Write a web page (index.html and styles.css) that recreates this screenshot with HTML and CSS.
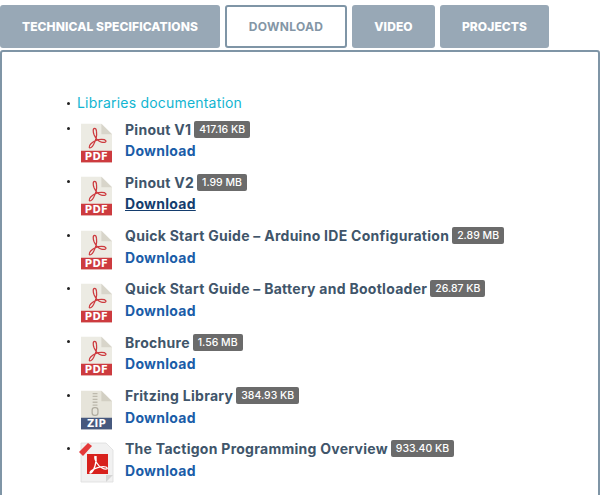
FILE: index.html
```html
<!DOCTYPE html>
<html lang="en">
<head>
    <meta charset="UTF-8">
    <meta name="viewport" content="width=device-width, initial-scale=1.0">
    <title>Download</title>
    <link rel="stylesheet" href="styles.css">
</head>
<body>
    <svg class="defs" width="0" height="0" aria-hidden="true">
        <symbol id="pdfIcon" viewBox="0 0 32 40">
            <path d="M0 0H21L32 11V40H0Z" fill="#ecebe3"/>
            <path d="M21 0L32 11H21Z" fill="#d8d5ca"/>
            <path d="M0 28H32V40H0Z" fill="#cd3b3f"/>
            <path d="M14 5C12 5 12.500 9 13.500 11.500C15 15 18 18.500 21 19C24.500 20 26.500 19 25.500 17.500C24.500 16 19 16 15 17.500C11.500 19 8 22.500 8.500 24.500C9 26 11.500 24.500 13 21.500C15 18 16.500 12 16 8C15.800 6 15 5 14 5Z" fill="none" stroke="#cd3b3f" stroke-width="1.300"/>
        </symbol>
        <symbol id="zipIcon" viewBox="0 0 32 40">
            <path d="M0 0H21L32 11V40H0Z" fill="#e6e4da"/>
            <path d="M21 0L32 11H21Z" fill="#d2cfc3"/>
            <path d="M0 28H32V40H0Z" fill="#47597e"/>
            <path d="M12 3H17M12 6H17M12 9H17M12 12H17M12 15H17" stroke="#bdb9ad" stroke-width="1.300"/>
            <rect x="11.500" y="17.500" width="6" height="8" rx="2.500" fill="none" stroke="#b0aca0" stroke-width="1.300"/>
        </symbol>
        <symbol id="acrobatIcon" viewBox="0 0 36 42">
            <path d="M3 1H28L35 8V40H3Z" fill="#f1f1f1" stroke="#dddddd" stroke-width="0.800"/>
            <path d="M28 33H35L28 40Z" fill="#d5d5d5"/>
            <rect x="9" y="12" width="21" height="20" fill="#d8211d"/>
            <path d="M1 10L10 1L14 4L5 14Z" fill="#e4393a"/>
            <path d="M17 14C16 18 20 24 24 26C28 28 31 27 28 25C25 24 18 25 13 29C11 31 12 32 14 30C16 28 19 20 18 14" fill="none" stroke="#ffffff" stroke-width="1.300"/>
        </symbol>
    </svg>

    <div class="tabs">
        <a class="tab tab-specs">TECHNICAL SPECIFICATIONS</a>
        <a class="tab tab-active">DOWNLOAD</a>
        <a class="tab tab-video">VIDEO</a>
        <a class="tab tab-projects">PROJECTS</a>
    </div>

    <div class="panel">
        <ul class="files">
            <li class="docs-link"><a>Libraries documentation</a></li>
            <li class="file">
                <div class="file-icon"><svg><use href="#pdfIcon"/></svg><span class="icon-label">PDF</span></div>
                <div>
                    <div class="file-title">Pinout V1 <span class="size">417.16 KB</span></div>
                    <a class="download">Download</a>
                </div>
            </li>
            <li class="file">
                <div class="file-icon"><svg><use href="#pdfIcon"/></svg><span class="icon-label">PDF</span></div>
                <div>
                    <div class="file-title">Pinout V2 <span class="size">1.99 MB</span></div>
                    <a class="download download-hover">Download</a>
                </div>
            </li>
            <li class="file">
                <div class="file-icon"><svg><use href="#pdfIcon"/></svg><span class="icon-label">PDF</span></div>
                <div>
                    <div class="file-title">Quick Start Guide – Arduino IDE Configuration <span class="size">2.89 MB</span></div>
                    <a class="download">Download</a>
                </div>
            </li>
            <li class="file">
                <div class="file-icon"><svg><use href="#pdfIcon"/></svg><span class="icon-label">PDF</span></div>
                <div>
                    <div class="file-title">Quick Start Guide – Battery and Bootloader <span class="size">26.87 KB</span></div>
                    <a class="download">Download</a>
                </div>
            </li>
            <li class="file">
                <div class="file-icon"><svg><use href="#pdfIcon"/></svg><span class="icon-label">PDF</span></div>
                <div>
                    <div class="file-title">Brochure <span class="size">1.56 MB</span></div>
                    <a class="download">Download</a>
                </div>
            </li>
            <li class="file">
                <div class="file-icon"><svg><use href="#zipIcon"/></svg><span class="icon-label">ZIP</span></div>
                <div>
                    <div class="file-title">Fritzing Library <span class="size">384.93 KB</span></div>
                    <a class="download">Download</a>
                </div>
            </li>
            <li class="file">
                <div class="file-icon file-icon-wide"><svg><use href="#acrobatIcon"/></svg></div>
                <div>
                    <div class="file-title">The Tactigon Programming Overview <span class="size">933.40 KB</span></div>
                    <a class="download">Download</a>
                </div>
            </li>
        </ul>
    </div>
</body>
</html>
```

FILE: styles.css
```css
body {
    font-family: Inter, "Open Sans", Arial, sans-serif;
    margin: 0;
    padding: 5px 0 0;
    height: 490px;
    overflow: hidden;
    background-color: white;
}

.defs {
    position: absolute;
}

/* Tabs */
.tabs {
    display: flex;
    gap: 5px;
    height: 43px;
}

.tab {
    display: flex;
    align-items: center;
    justify-content: center;
    box-sizing: border-box;
    background-color: #98a8b6;
    color: white;
    font-size: 12px;
    font-weight: 800;
    letter-spacing: 0.1px;
    border-radius: 3px;
}

.tab-specs {
    width: 220px;
}

.tab-active {
    width: 122px;
    background-color: white;
    color: #8496a6;
    font-weight: 700;
    letter-spacing: 0.3px;
    border: 2px solid #7f95a6;
}

.tab-video {
    width: 83px;
}

.tab-projects {
    width: 109px;
}

/* Panel */
.panel {
    margin-top: 2px;
    height: 460px;
    border: 2px solid #7f95a6;
    border-radius: 3px;
}

.files {
    list-style: none;
    margin: 0;
    padding: 42px 0 0 65px;
}

.files li {
    position: relative;
    padding-left: 10px;
}

.files li::before {
    content: "";
    position: absolute;
    left: 0;
    top: 8px;
    width: 3px;
    height: 3px;
    border-radius: 50%;
    background-color: #222222;
}

.docs-link {
    height: 25px;
    font-size: 14px;
    letter-spacing: 0.2px;
    line-height: 18px;
    color: #12b5d1;
}

.file {
    display: flex;
    gap: 13px;
    height: 53.33px;
    font-size: 14px;
    font-weight: 700;
    letter-spacing: 0.27px;
}

.file-icon {
    position: relative;
    flex: none;
    width: 31px;
    height: 40px;
    margin: 4px 0 0 4px;
}

.file-icon svg {
    display: block;
    width: 100%;
    height: 100%;
}

.icon-label {
    position: absolute;
    left: 0;
    right: 0;
    bottom: 0;
    font-family: "DejaVu Sans", sans-serif;
    font-size: 10px;
    font-weight: bold;
    letter-spacing: 0.3px;
    line-height: 12px;
    text-align: center;
    color: white;
}

.file-icon-wide {
    width: 36px;
    height: 42px;
    margin: 3px -2px 0 1px;
}

.file-title {
    display: flex;
    align-items: center;
    gap: 3px;
    height: 20px;
    color: #40556a;
}

.size {
    background-color: #6b6b6b;
    color: white;
    font-size: 10.5px;
    font-weight: 500;
    letter-spacing: 0;
    line-height: 17px;
    padding: 0 5px;
    border-radius: 2px;
}

.download {
    display: block;
    line-height: 23px;
    color: #1a5da8;
}

.download-hover {
    display: table;
    color: #143d6e;
    text-decoration: underline;
}
```
